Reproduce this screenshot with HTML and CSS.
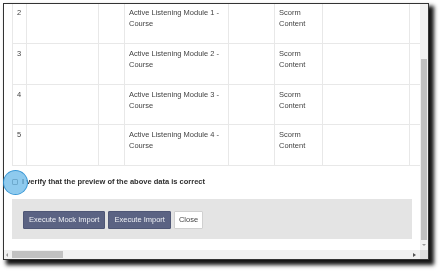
FILE: index.html
```html
<!DOCTYPE html>
<html>
<head>
<meta charset="utf-8">
<link rel="stylesheet" href="styles.css">
</head>
<body>
<div class="frame">
  <div class="content">
    <div class="grid">
      <div class="cell">2</div><div class="cell"></div><div class="cell"></div><div class="cell">Active Listening Module 1 - Course</div><div class="cell"></div><div class="cell">Scorm Content</div><div class="cell"></div><div class="cell"></div>
      <div class="cell">3</div><div class="cell"></div><div class="cell"></div><div class="cell">Active Listening Module 2 - Course</div><div class="cell"></div><div class="cell">Scorm Content</div><div class="cell"></div><div class="cell"></div>
      <div class="cell">4</div><div class="cell"></div><div class="cell"></div><div class="cell">Active Listening Module 3 - Course</div><div class="cell"></div><div class="cell">Scorm Content</div><div class="cell"></div><div class="cell"></div>
      <div class="cell">5</div><div class="cell"></div><div class="cell"></div><div class="cell">Active Listening Module 4 - Course</div><div class="cell"></div><div class="cell">Scorm Content</div><div class="cell"></div><div class="cell"></div>
    </div>
    <label class="verify"><span class="box"></span><span>I verify that the preview of the above data is correct</span></label>
    <div class="actions">
      <button class="btn btn-primary">Execute Mock Import</button>
      <button class="btn btn-primary">Execute Import</button>
      <button class="btn btn-default">Close</button>
    </div>
  </div>
  <div class="vscroll">
    <div class="vthumb"></div>
    <div class="arrow-down"></div>
  </div>
  <div class="hscroll">
    <div class="arrow-left"></div>
    <div class="hthumb"></div>
    <div class="hspacer"></div>
    <div class="arrow-right"></div>
  </div>
  <div class="corner"></div>
</div>
<div class="spot"></div>
</body>
</html>
```

FILE: styles.css
```css
html, body {
  margin: 0;
  padding: 0;
  background: #ffffff;
}
body {
  font-family: "Liberation Sans", Arial, sans-serif;
  font-size: 7.5px;
  line-height: 10.7px;
  color: #444;
  width: 443px;
  height: 273px;
  overflow: hidden;
  position: relative;
  -webkit-font-smoothing: antialiased;
}
.frame {
  margin: 3px 0 0 3px;
  width: 426px;
  height: 257px;
  box-sizing: border-box;
  border: 1px solid #333;
  box-shadow: 4px 4px 4px 1px rgba(0, 0, 0, 0.92);
  display: grid;
  grid-template-columns: 1fr 8px;
  grid-template-rows: 1fr 9px;
  background: #fff;
}
.content {
  overflow: hidden;
  min-width: 0;
  min-height: 0;
  will-change: transform;
  background: #fff;
}
.grid {
  display: grid;
  grid-template-columns: 14px 72px 26px 104px 46px 48px 87px 120px;
  grid-template-rows: 41px 41px 40px 41px;
  width: max-content;
  margin: -2px 0 0 8px;
  border-top: 1px solid #e8e8e8;
  border-left: 1px solid #e8e8e8;
}
.cell {
  box-sizing: border-box;
  border-right: 1px solid #e8e8e8;
  border-bottom: 1px solid #e8e8e8;
  padding: 3.5px 4px;
  line-height: 11.5px;
  color: #444;
}
.verify {
  display: flex;
  align-items: center;
  gap: 4px;
  margin: 10.5px 0 0 8px;
  font-weight: bold;
  color: #2e2e2e;
}
.box {
  width: 6px;
  height: 6px;
  box-sizing: border-box;
  border: 1px solid #8a8a8a;
  border-radius: 1px;
  background: #fff;
}
.actions {
  display: flex;
  gap: 3px;
  margin: 11.5px 0 0 8px;
  width: 400px;
  box-sizing: border-box;
  padding: 12px 11px 10px;
  background: #e4e4e4;
}
.btn {
  font-family: "Liberation Sans", Arial, sans-serif;
  font-size: 7.5px;
  line-height: 10.7px;
  padding: 3px 5px;
  margin: 0;
  border: 1px solid;
  border-radius: 1px;
}
.btn-primary {
  background: #5b6383;
  border-color: #4f5776;
  color: #eef0f5;
}
.btn-default {
  background: #fff;
  border-color: #d0d0d0;
  color: #444;
  padding: 3px 4px;
}
.vscroll {
  background: #f1f1f1;
  display: flex;
  flex-direction: column;
  align-items: center;
}
.vthumb {
  width: 6px;
  height: 181px;
  margin-top: 55px;
  background: #c1c1c1;
}
.arrow-down {
  margin-top: 4px;
  width: 0;
  height: 0;
  border-left: 2px solid transparent;
  border-right: 2px solid transparent;
  border-top: 2px solid #9a9a9a;
}
.hscroll {
  background: #f1f1f1;
  display: flex;
  align-items: center;
  padding-left: 2px;
  padding-right: 4px;
}
.arrow-left {
  width: 0;
  height: 0;
  border-top: 2px solid transparent;
  border-bottom: 2px solid transparent;
  border-right: 2px solid #9a9a9a;
}
.hthumb {
  margin-left: 4px;
  width: 51px;
  height: 7px;
  background: #c1c1c1;
}
.hspacer {
  flex: 1;
}
.arrow-right {
  width: 0;
  height: 0;
  border-top: 2.5px solid transparent;
  border-bottom: 2.5px solid transparent;
  border-left: 3px solid #555;
}
.corner {
  background: #dcdcdc;
}
.spot {
  position: absolute;
  left: 3px;
  top: 170px;
  width: 25px;
  height: 25px;
  box-sizing: border-box;
  border-radius: 50%;
  background: rgba(98, 182, 232, 0.72);
  border: 1px solid rgba(45, 145, 210, 0.85);
}
```
